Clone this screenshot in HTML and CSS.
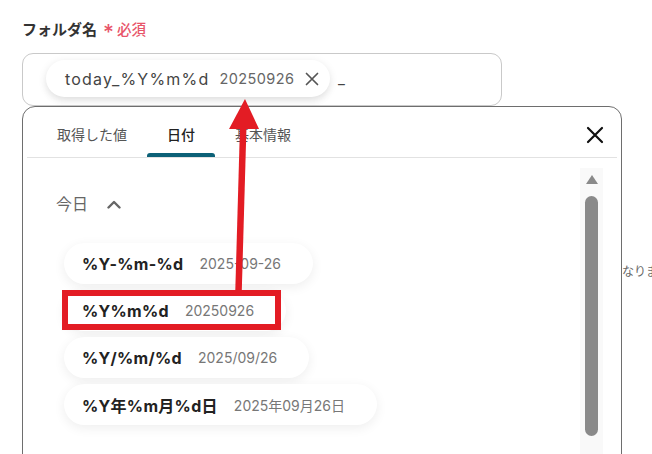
FILE: index.html
```html
<!DOCTYPE html>
<html lang="ja">
<head>
<meta charset="utf-8">
<link rel="stylesheet" href="styles.css">
</head>
<body>
<div class="page">
  <div class="side-text">なりま</div>
  <div class="label">フォルダ名<span class="req"><span class="ast">*</span>必須</span></div>
  <div class="input">
    <span class="chip">
      <span class="chip-key">today_%Y%m%d</span>
      <span class="chip-val">20250926</span>
      <svg class="chip-x" width="14" height="14" viewBox="0 0 14 14"><path d="M1.5 1.5L12.5 12.5M12.5 1.5L1.5 12.5" stroke="#555" stroke-width="1.7" stroke-linecap="round"/></svg>
    </span>
    <span class="cursor">_</span>
  </div>
  <div class="panel">
    <div class="tabbar">
      <div class="tabs">
        <div class="tab">取得した値</div>
        <div class="tab active">日付</div>
        <div class="tab">基本情報</div>
      </div>
      <svg class="close" width="18" height="18" viewBox="0 0 18 18"><path d="M2 2L16 16M16 2L2 16" stroke="#111" stroke-width="2.2" stroke-linecap="round"/></svg>
    </div>
    <div class="body">
      <div class="content">
        <div class="section">今日
          <svg class="chev" width="14" height="9" viewBox="0 0 14 9"><path d="M1.5 7.5L7 2L12.5 7.5" fill="none" stroke="#666" stroke-width="2.4" stroke-linecap="round" stroke-linejoin="round"/></svg>
        </div>
        <div class="list">
          <div class="item"><span class="key">%Y-%m-%d</span><span class="val">2025-09-26</span></div>
          <div class="item"><span class="key">%Y%m%d</span><span class="val">20250926</span></div>
          <div class="item"><span class="key">%Y/%m/%d</span><span class="val">2025/09/26</span></div>
          <div class="item"><span class="key">%Y年%m月%d日</span><span class="val">2025年09月26日</span></div>
        </div>
      </div>
      <div class="scroll">
        <div class="scroll-up"></div>
        <div class="scroll-thumb"></div>
      </div>
    </div>
  </div>
  <div class="redbox"></div>
  <svg class="arrow" width="652" height="454" viewBox="0 0 652 454">
    <line x1="238.5" y1="292" x2="243.3" y2="124" stroke="#e31c24" stroke-width="6.5"/>
    <polygon points="245,99 229,129 259,129" fill="#e31c24"/>
  </svg>
</div>
</body>
</html>
```
FILE: styles.css
```css
* { box-sizing: border-box; }
html, body { margin: 0; padding: 0; background: #fff; }
body {
  width: 652px;
  height: 454px;
  overflow: hidden;
  font-family: Inter, "Noto Sans CJK JP", sans-serif;
  color: #333;
}
.page {
  position: relative;
  width: 652px;
  height: 454px;
  padding: 20px 0 0 22px;
}
.label {
  font-size: 15px;
  font-weight: 700;
  color: #333;
  line-height: 20px;
  height: 20px;
  display: flex;
  align-items: center;
}
.req {
  color: #e8556a;
  font-size: 14.5px;
  font-weight: 500;
  margin-left: 6px;
  display: flex;
  align-items: center;
}
.ast {
  font-size: 21px;
  margin-right: 3px;
  line-height: 20px;
  position: relative;
  top: 3px;
}
.input {
  margin-top: 13px;
  width: 480px;
  height: 53px;
  border: 1px solid #c9c9c9;
  border-radius: 11px;
  padding: 6px 0 0 23px;
  display: flex;
  align-items: flex-start;
}
.chip {
  height: 37px;
  width: 284px;
  border-radius: 19px;
  background: #fff;
  box-shadow: 0 2px 8px rgba(0,0,0,0.10), 0 6px 8px -2px rgba(0,0,0,0.05);
  display: flex;
  align-items: center;
  padding-left: 19px;
}
.chip-key {
  font-size: 16px;
  letter-spacing: 1.2px;
  color: #444;
}
.chip-val {
  font-size: 14.5px;
  letter-spacing: 0.4px;
  color: #666;
  margin-left: 10px;
}
.chip-x { margin-left: 11px; }
.cursor {
  margin-left: 8px;
  margin-top: 9px;
  font-size: 15px;
  color: #444;
}
.panel {
  position: relative;
  z-index: 1;
  margin-top: 0;
  width: 600px;
  height: 400px;
  border: 1px solid #6e6e6e;
  border-radius: 13px 13px 0 0;
  background: #fff;
  padding: 0 4px;
}
.tabbar {
  height: 51px;
  border-bottom: 1px solid #e2e2e2;
  display: flex;
  justify-content: space-between;
  align-items: flex-start;
}
.tabs {
  display: flex;
  padding-left: 10px;
}
.tab {
  padding: 18px 20px 12px;
  height: 50px;
  font-size: 14px;
  line-height: 20px;
  color: #555;
  position: relative;
}
.tab.active { color: #222; font-weight: 500; }
.tab.active::after {
  content: "";
  position: absolute;
  left: 0; right: 0; bottom: 0;
  height: 4px;
  border-radius: 3px 3px 0 0;
  background: #0c6177;
}
.close { margin: 19px 13px 0 0; }
.body {
  display: flex;
  justify-content: space-between;
}
.content { padding-left: 29px; }
.section {
  margin-top: 34px;
  height: 24px;
  font-size: 16px;
  line-height: 24px;
  color: #666;
  display: flex;
  align-items: center;
}
.chev { margin-left: 19px; }
.list {
  margin-top: 27px;
  display: flex;
  flex-direction: column;
  align-items: flex-start;
  gap: 6px;
  margin-left: 8px;
}
.item {
  height: 41px;
  border-radius: 21px;
  background: #fff;
  box-shadow: 0 3px 12px rgba(0,0,0,0.07);
  display: flex;
  align-items: center;
  padding: 0 32px 0 18px;
}
.key {
  font-size: 16px;
  font-weight: 700;
  letter-spacing: 0.3px;
  color: #222;
}
.val {
  margin-left: 16px;
  font-size: 14px;
  letter-spacing: 0;
  color: #777;
}
.scroll {
  margin: 10px 14px 0 0;
  width: 23px;
  height: 320px;
  background: #f9f9f9;
  display: flex;
  flex-direction: column;
  align-items: center;
}
.scroll-up {
  margin-top: 7px;
  width: 0; height: 0;
  border-left: 6.5px solid transparent;
  border-right: 6.5px solid transparent;
  border-bottom: 9px solid #8a8a8a;
}
.scroll-thumb {
  margin-top: 12px;
  width: 13px;
  height: 240px;
  border-radius: 7px;
  background: #8a8a8a;
}
.side-text {
  position: absolute;
  left: 622px;
  top: 262px;
  font-size: 12px;
  color: #666;
  white-space: nowrap;
}
.redbox {
  position: absolute;
  z-index: 2;
  left: 62px;
  top: 290px;
  width: 219px;
  height: 40px;
  border: 6px solid #e31c24;
}
.arrow {
  position: absolute;
  z-index: 3;
  left: 0;
  top: 0;
}
```
